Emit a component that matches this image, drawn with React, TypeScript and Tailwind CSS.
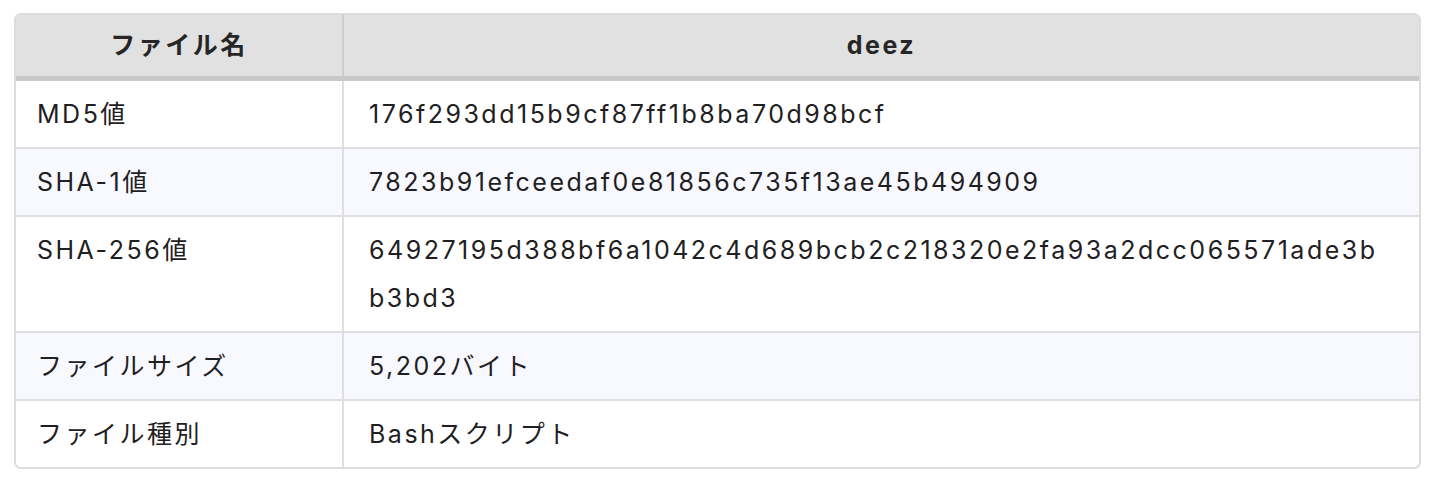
import React from "react";

const rows: { k: string; v: string }[] = [
  { k: "MD5値", v: "176f293dd15b9cf87ff1b8ba70d98bcf" },
  { k: "SHA-1値", v: "7823b91efceedaf0e81856c735f13ae45b494909" },
  { k: "SHA-256値", v: "64927195d388bf6a1042c4d689bcb2c218320e2fa93a2dcc065571ade3bb3bd3" },
  { k: "ファイルサイズ", v: "5,202バイト" },
  { k: "ファイル種別", v: "Bashスクリプト" },
];

export default function App() {
  return (
    <div
      className="bg-white w-[1438px] h-[488px] pt-[13px] pl-[14px]"
      style={{ fontFamily: 'Inter, "Noto Sans CJK JP", sans-serif' }}
    >
      <div className="w-[1407px] border-2 border-[#dcdcdf] rounded-[7px] overflow-hidden text-[#1f2023] tracking-[2.5px]">
        <div className="flex h-[66px] bg-[#e1e1e1] border-b-[5px] border-[#c8c8c8] text-[25px] font-bold text-[#262626]">
          <div className="w-[328px] border-r-2 border-[#cdcdcd] flex items-center justify-center">
            ファイル名
          </div>
          <div className="flex-1 flex items-center justify-center">deez</div>
        </div>
        {rows.map((r, i) => (
          <div
            key={r.k}
            className={`flex text-[25px] leading-[48px] ${i > 0 ? "border-t-2 border-[#dfdfe3]" : ""} ${
              i % 2 === 1 ? "bg-[#f8f9fe]" : "bg-white"
            }`}
          >
            <div className="w-[328px] shrink-0 border-r-2 border-[#dfdfe3] pl-[21px] py-[9px]">{r.k}</div>
            <div className="flex-1 pl-[25px] pr-[36px] py-[9px] break-all">{r.v}</div>
          </div>
        ))}
      </div>
    </div>
  );
}
